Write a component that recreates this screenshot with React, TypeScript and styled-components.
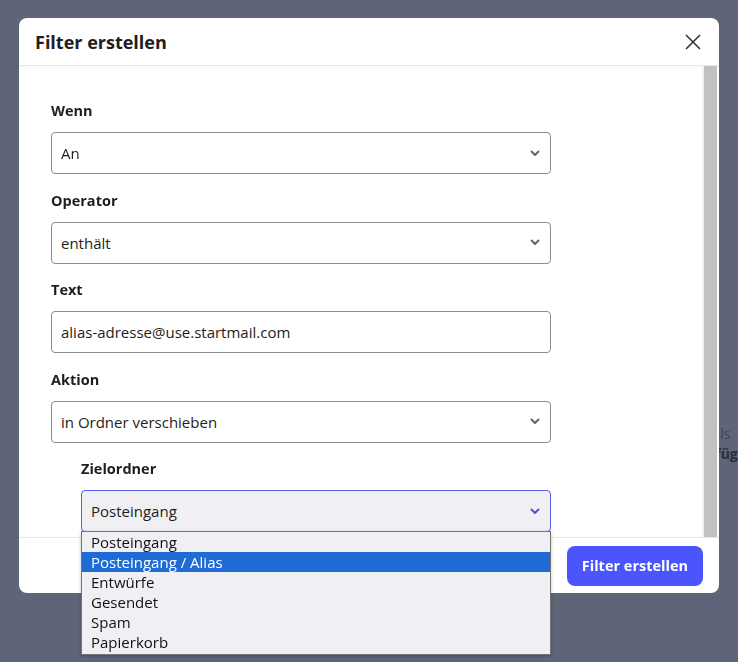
import styled, { createGlobalStyle } from 'styled-components';

const GlobalStyle = createGlobalStyle`
  html, body {
    margin: 0;
    padding: 0;
  }
  body {
    font-family: "Open Sans", Lato, Arial, sans-serif;
    background: #5e6578;
  }
`;

const Page = styled.div`
  width: 738px;
  height: 662px;
  overflow: hidden;
  background: #5e6578;
  display: flex;
  flex-direction: column;
  padding-top: 425px;
  box-sizing: border-box;
  gap: 2px;
`;

const PageLine = styled.div<{ $indent: number; $bold?: boolean }>`
  padding-left: ${(p) => p.$indent}px;
  font-size: 14px;
  line-height: 18px;
  white-space: nowrap;
  font-weight: ${(p) => (p.$bold ? 700 : 400)};
  color: ${(p) => (p.$bold ? '#2a2e38' : '#40465a')};
`;

const Overlay = styled.div`
  position: fixed;
  inset: 0;
  display: flex;
  align-items: flex-start;
  padding: 18px 0 0 19px;
`;

const Modal = styled.div`
  width: 700px;
  height: 575px;
  background: #fff;
  border-radius: 8px;
  display: flex;
  flex-direction: column;
`;

const Header = styled.div`
  height: 47px;
  display: flex;
  align-items: center;
  justify-content: space-between;
  padding: 0 16px;
  border-bottom: 1px solid #e6e6e6;
  box-shadow: 0 1px 2px rgba(0, 0, 0, 0.04);
`;

const Title = styled.h2`
  margin: 0;
  font-size: 18px;
  font-weight: 700;
  color: #1d1d22;
`;

const CloseButton = styled.button`
  border: 0;
  background: none;
  padding: 0;
  width: 20px;
  height: 20px;
  display: flex;
  align-items: center;
  justify-content: center;
  color: #333;
  cursor: pointer;
`;

const Body = styled.div`
  height: 471px;
  display: flex;
`;

const Form = styled.div`
  flex: 1;
  padding: 35px 0 0 32px;
  display: flex;
  flex-direction: column;
`;

const Field = styled.div<{ $indent?: boolean }>`
  width: ${(p) => (p.$indent ? 470 : 500)}px;
  margin-left: ${(p) => (p.$indent ? 30 : 0)}px;
  margin-bottom: 16.5px;
  display: flex;
  flex-direction: column;
  gap: 11px;
`;

const Label = styled.label`
  font-size: 14.5px;
  line-height: 20px;
  font-weight: 700;
  color: #1d1d22;
`;

const Control = styled.div<{ $focused?: boolean }>`
  position: relative;
  height: 42px;
  box-sizing: border-box;
  display: flex;
  align-items: center;
  justify-content: space-between;
  padding: 0 10px 0 9px;
  border: 1px solid ${(p) => (p.$focused ? '#5a60f2' : '#8c8c8c')};
  border-radius: 4px;
  background: ${(p) => (p.$focused ? '#f0f0f4' : '#fff')};
  font-size: 15px;
  color: #1d1d22;
`;

const Scrollbar = styled.div`
  width: 15px;
  margin-right: 2px;
  background: #f1f1f1;
  display: flex;
  justify-content: flex-end;
`;

const Thumb = styled.div`
  width: 13px;
  background: #c1c1c1;
`;

const Footer = styled.div`
  flex: 1;
  display: flex;
  align-items: center;
  justify-content: flex-end;
  padding-right: 16px;
  border-top: 1px solid #e6e6e6;
`;

const PrimaryButton = styled.button`
  height: 40px;
  padding: 0 15px;
  border: 0;
  border-radius: 8px;
  background: #4b55fd;
  color: #fff;
  font-family: inherit;
  font-size: 14.5px;
  font-weight: 700;
  cursor: pointer;
`;

const Dropdown = styled.ul`
  position: absolute;
  top: 100%;
  left: -1px;
  right: -1px;
  margin: 0;
  padding: 0 0 2px;
  list-style: none;
  background: #f0f0f4;
  border: 1px solid #767676;
  box-shadow: 0 1px 3px rgba(0, 0, 0, 0.25);
  z-index: 5;
`;

const Option = styled.li<{ $active?: boolean }>`
  height: 20px;
  line-height: 20px;
  padding-left: 9px;
  font-size: 15px;
  color: ${(p) => (p.$active ? '#fff' : '#111')};
  background: ${(p) => (p.$active ? '#1e6bd6' : 'transparent')};
`;

function Chevron({ color = '#666' }: { color?: string }) {
  return (
    <svg width="10" height="7" viewBox="0 0 10 7">
      <path d="M1.5 1.5 L5 5 L8.5 1.5" fill="none" stroke={color} strokeWidth="2" strokeLinecap="round" strokeLinejoin="round" />
    </svg>
  );
}

const folders = ['Posteingang', 'Posteingang / Alias', 'Entwürfe', 'Gesendet', 'Spam', 'Papierkorb'];

export default function App() {
  return (
    <>
      <GlobalStyle />
      <Page>
        <PageLine $indent={684}>E-Mails</PageLine>
        <PageLine $indent={675} $bold>
          Hinzufügen
        </PageLine>
      </Page>
      <Overlay>
        <Modal>
          <Header>
            <Title>Filter erstellen</Title>
            <CloseButton aria-label="Schließen">
              <svg width="16" height="16" viewBox="0 0 16 16">
                <path d="M1 1 L15 15 M15 1 L1 15" stroke="currentColor" strokeWidth="1.6" />
              </svg>
            </CloseButton>
          </Header>
          <Body>
            <Form>
              <Field>
                <Label>Wenn</Label>
                <Control>
                  An
                  <Chevron />
                </Control>
              </Field>
              <Field>
                <Label>Operator</Label>
                <Control>
                  enthält
                  <Chevron />
                </Control>
              </Field>
              <Field>
                <Label>Text</Label>
                <Control>alias-adresse@use.startmail.com</Control>
              </Field>
              <Field>
                <Label>Aktion</Label>
                <Control>
                  in Ordner verschieben
                  <Chevron />
                </Control>
              </Field>
              <Field $indent>
                <Label>Zielordner</Label>
                <Control $focused>
                  Posteingang
                  <Chevron color="#4a52d6" />
                  <Dropdown>
                    {folders.map((f) => (
                      <Option key={f} $active={f === 'Posteingang / Alias'}>
                        {f}
                      </Option>
                    ))}
                  </Dropdown>
                </Control>
              </Field>
            </Form>
            <Scrollbar>
              <Thumb />
            </Scrollbar>
          </Body>
          <Footer>
            <PrimaryButton>Filter erstellen</PrimaryButton>
          </Footer>
        </Modal>
      </Overlay>
    </>
  );
}
